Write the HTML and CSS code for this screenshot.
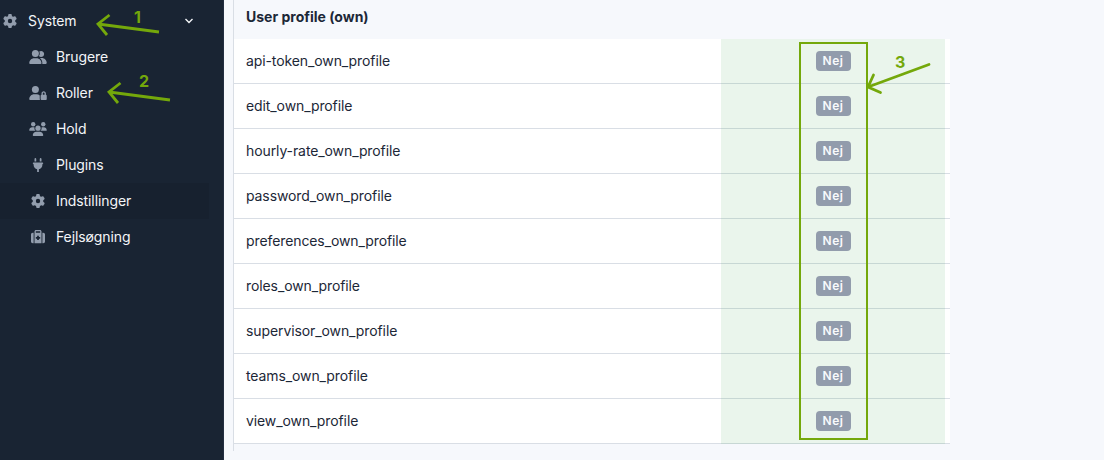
FILE: index.html
```html
<!DOCTYPE html>
<html lang="da">
<head>
<meta charset="utf-8">
<title>Roller</title>
<link rel="stylesheet" href="styles.css">
</head>
<body>
<svg class="symbols" aria-hidden="true">
  <symbol id="gear" viewBox="0 0 512 512"><path d="M495.9 166.6c3.2 8.7 .5 18.4-6.4 24.6l-43.3 39.4c1.1 8.3 1.7 16.8 1.7 25.4s-.6 17.1-1.7 25.4l43.3 39.4c6.9 6.2 9.6 15.9 6.4 24.6c-4.4 11.9-9.7 23.3-15.8 34.3l-4.7 8.1c-6.6 11-14 21.4-22.1 31.2c-5.9 7.2-15.7 9.6-24.5 6.8l-55.7-17.7c-13.4 10.3-28.2 18.9-44 25.4l-12.5 57.1c-2 9.1-9 16.3-18.2 17.8c-13.8 2.3-28 3.5-42.5 3.5s-28.7-1.2-42.5-3.5c-9.2-1.5-16.2-8.7-18.2-17.8l-12.5-57.1c-15.8-6.5-30.6-15.1-44-25.4L83.1 425.9c-8.8 2.8-18.6 .3-24.5-6.8c-8.1-9.8-15.5-20.2-22.1-31.2l-4.7-8.1c-6.1-11-11.4-22.4-15.8-34.3c-3.2-8.7-.5-18.4 6.4-24.6l43.3-39.4C64.6 273.1 64 264.6 64 256s.6-17.1 1.7-25.4L22.4 191.2c-6.9-6.2-9.6-15.9-6.4-24.6c4.4-11.9 9.7-23.3 15.8-34.3l4.7-8.1c6.6-11 14-21.4 22.1-31.2c5.9-7.2 15.7-9.6 24.5-6.8l55.7 17.7c13.4-10.3 28.2-18.9 44-25.4l12.5-57.1c2-9.1 9-16.3 18.2-17.8C227.3 1.2 241.5 0 256 0s28.7 1.2 42.5 3.5c9.2 1.5 16.2 8.7 18.2 17.8l12.5 57.1c15.8 6.5 30.6 15.1 44 25.4l55.7-17.7c8.8-2.8 18.6-.3 24.5 6.8c8.1 9.8 15.5 20.2 22.1 31.2l4.7 8.1c6.1 11 11.4 22.4 15.8 34.3zM256 336a80 80 0 1 0 0-160 80 80 0 1 0 0 160z"/></symbol>
  <symbol id="friends" viewBox="0 0 640 512"><circle cx="224" cy="128" r="128"/><path d="M0 482C0 384 80 304 178 304h92c98 0 178 80 178 178 0 17-13 30-30 30H30c-17 0-30-13-30-30zM609 512H471c6-9 9-20 9-32 0-78-36-147-93-191 3 0 6-1 10-1h62c100 0 181 81 181 181 0 24-14 43-31 43zM432 256c-31 0-59-13-79-33 20-27 31-60 31-95 0-27-7-53-18-75 18-13 41-21 66-21 62 0 112 50 112 112s-50 112-112 112z"/></symbol>
  <symbol id="lock" viewBox="0 0 640 512"><circle cx="224" cy="128" r="128"/><path d="M178 304h92c43 0 83 15 114 42-1 2 0 166 9 166H30c-17 0-30-13-30-30 0-98 80-178 178-178z"/><path fill-rule="evenodd" d="M528 192c44 0 80 36 80 80v48c18 0 32 14 32 32v128c0 18-14 32-32 32H448c-18 0-32-14-32-32V352c0-18 14-32 32-32v-48c0-44 36-80 80-80zm0 48c-18 0-32 14-32 32v48h64v-48c0-18-14-32-32-32z"/></symbol>
  <symbol id="team" viewBox="0 0 640 512"><circle cx="144" cy="80" r="80"/><circle cx="512" cy="80" r="80"/><circle cx="320" cy="224" r="96"/><path d="M0 299c0-59 48-107 107-107h42c16 0 31 3 45 10-16 61 8 98 42 118H21c-12 0-21-9-21-21zM405 320c40-24 56-67 43-118 13-6 28-10 43-10h42c59 0 107 48 107 107 0 12-9 21-21 21zM128 485c0-73 60-133 133-133h118c73 0 133 60 133 133 0 15-12 27-27 27H155c-15 0-27-12-27-27z"/></symbol>
  <symbol id="plug" viewBox="0 0 384 512"><path d="M96 0c18 0 32 14 32 32v96H64V32C64 14 78 0 96 0zM288 0c18 0 32 14 32 32v96h-64V32c0-18 14-32 32-32zM32 160h320c18 0 32 14 32 32s-14 32-32 32v32c0 77-55 142-128 157v99h-64v-99C87 398 32 333 32 256v-32c-18 0-32-14-32-32s14-32 32-32z"/></symbol>
  <symbol id="medkit" viewBox="0 0 512 512"><path fill-rule="evenodd" d="M184 48h144c4 0 8 4 8 8v40H176V56c0-4 4-8 8-8zm-56 8v424h256V56c0-31-25-56-56-56H184c-31 0-56 25-56 56zM64 96h32v384H64c-35 0-64-29-64-64V160c0-35 29-64 64-64zm352 0h32c35 0 64 29 64 64v256c0 35-29 64-64 64h-32zM224 208h64v48h48v64h-48v48h-64v-48h-48v-64h48z"/></symbol>
</svg>
<div class="app">
  <nav class="sidebar">
    <a class="item parent"><svg class="icon"><use href="#gear"/></svg><span>System</span><svg class="chevron" viewBox="0 0 10 8"><path d="M1.5 2 5 5.5 8.5 2"/></svg></a>
    <a class="item"><svg class="icon"><use href="#friends"/></svg><span>Brugere</span></a>
    <a class="item"><svg class="icon"><use href="#lock"/></svg><span>Roller</span></a>
    <a class="item"><svg class="icon"><use href="#team"/></svg><span>Hold</span></a>
    <a class="item"><svg class="icon"><use href="#plug"/></svg><span>Plugins</span></a>
    <a class="item active"><svg class="icon"><use href="#gear"/></svg><span>Indstillinger</span></a>
    <a class="item"><svg class="icon"><use href="#medkit"/></svg><span>Fejlsøgning</span></a>
  </nav>
  <main class="permissions">
    <h2 class="heading">User profile (own)</h2>
    <div class="row"><span class="name">api-token_own_profile</span><span class="cell"><b class="badge">Nej</b></span></div>
    <div class="row"><span class="name">edit_own_profile</span><span class="cell"><b class="badge">Nej</b></span></div>
    <div class="row"><span class="name">hourly-rate_own_profile</span><span class="cell"><b class="badge">Nej</b></span></div>
    <div class="row"><span class="name">password_own_profile</span><span class="cell"><b class="badge">Nej</b></span></div>
    <div class="row"><span class="name">preferences_own_profile</span><span class="cell"><b class="badge">Nej</b></span></div>
    <div class="row"><span class="name">roles_own_profile</span><span class="cell"><b class="badge">Nej</b></span></div>
    <div class="row"><span class="name">supervisor_own_profile</span><span class="cell"><b class="badge">Nej</b></span></div>
    <div class="row"><span class="name">teams_own_profile</span><span class="cell"><b class="badge">Nej</b></span></div>
    <div class="row"><span class="name">view_own_profile</span><span class="cell"><b class="badge">Nej</b></span></div>
  </main>
</div>
<svg class="annotations" viewBox="0 0 1104 460">
  <rect x="800" y="43" width="67" height="396" stroke-width="2"/>
  <path d="M159 32 98 24M109.500 15 98 24l9 11"/>
  <path d="M170 100 109 92M120.500 83 109 92l9 11"/>
  <path stroke-linecap="round" d="M929 64.500 868 87M873.500 75 868 87l12.500 5.500"/>
  <text x="134" y="23">1</text>
  <text x="139" y="87">2</text>
  <text x="895" y="68">3</text>
</svg>
</body>
</html>
```

FILE: styles.css
```css
* { box-sizing: border-box; }
body {
  margin: 0;
  height: 460px;
  overflow: hidden;
  background: #f6f8fc;
  color: #1c2737;
  font: 14px/20px Inter, "Liberation Sans", sans-serif;
  letter-spacing: -.1px;
}
.symbols { display: none; }
.app { display: flex; height: 460px; }
.sidebar {
  flex: none;
  width: 224px;
  padding-top: 3px;
  background: #192433;
  border-right: 1px solid #232e40;
}
.item {
  display: flex;
  align-items: center;
  width: 209px;
  height: 36px;
  padding-left: 28px;
  color: #f3f5f8;
}
.item.parent { padding-left: 0; width: 194px; }
.item.active { background: #17212f; }
.icon {
  flex: none;
  width: 20px;
  height: 14px;
  margin-right: 8px;
  fill: #929dad;
}
.chevron {
  width: 10px;
  height: 8px;
  margin-left: auto;
  fill: none;
  stroke: #f3f5f8;
  stroke-width: 1.4;
}
.permissions {
  width: 717px;
  height: 451px;
  margin-left: 9px;
  border-left: 1px solid #d9dee5;
}
.heading {
  height: 39px;
  margin: 0;
  padding: 7px 12px;
  font-size: 14px;
  line-height: 20px;
  font-weight: 700;
  letter-spacing: 0;
}
.row {
  display: flex;
  height: 45px;
  padding-right: 5px;
  background: linear-gradient(#d9dee5, #d9dee5) bottom / 100% 1px no-repeat #fff;
}
.name { flex: 1; padding: 12px; }
.cell {
  display: flex;
  justify-content: center;
  width: 224px;
  padding-top: 12px;
  background: rgba(47, 160, 67, .1);
}
.badge {
  width: 35px;
  height: 20px;
  border-radius: 4px;
  background: #929cac;
  color: #f8fafc;
  font-size: 12px;
  line-height: 20px;
  font-weight: 600;
  letter-spacing: .5px;
  text-align: center;
}
.annotations {
  position: absolute;
  top: 0;
  left: 0;
  width: 1104px;
  height: 460px;
  fill: none;
  stroke: #74a80b;
  stroke-width: 2.8;
  pointer-events: none;
}
.annotations text {
  fill: #74a80b;
  stroke: none;
  font-size: 16px;
  font-weight: 700;
}
```
